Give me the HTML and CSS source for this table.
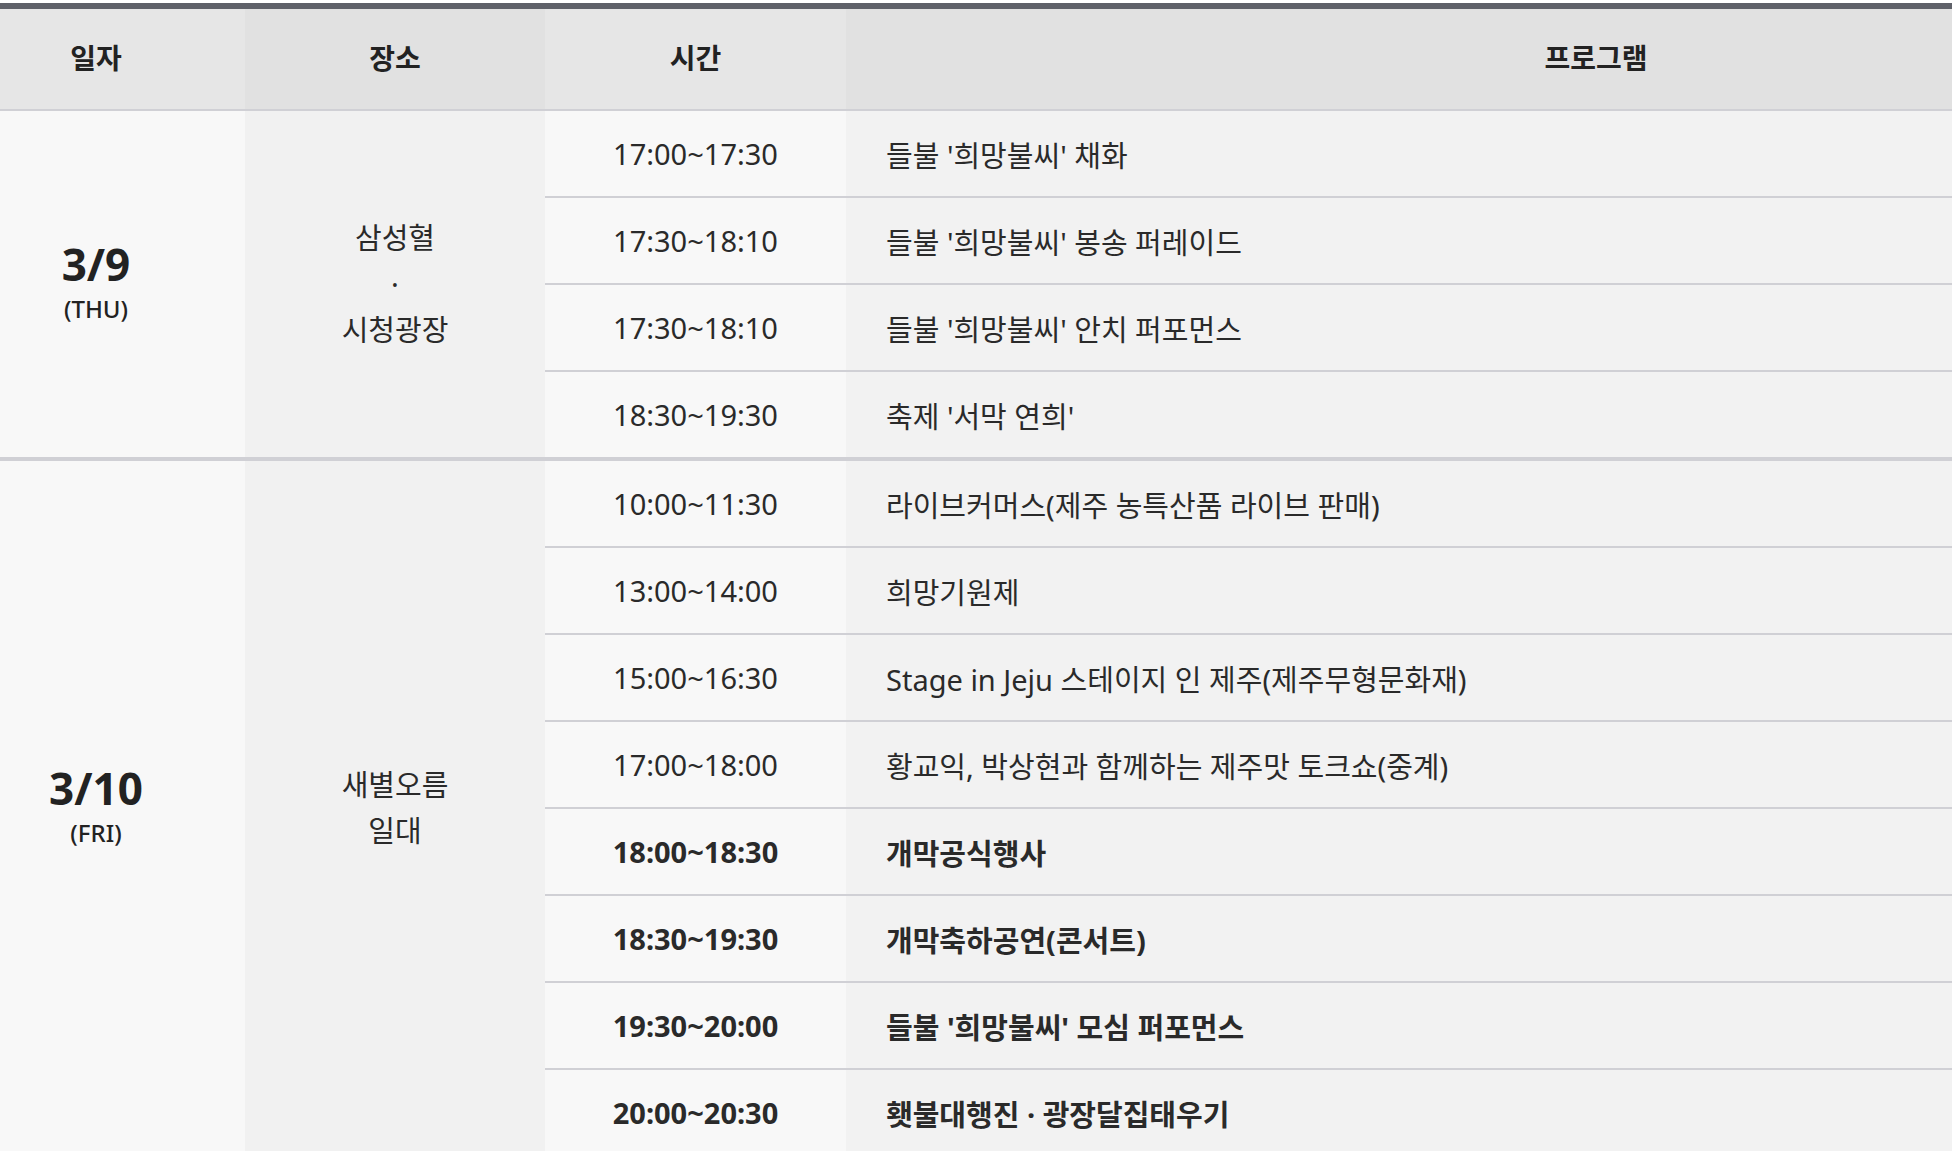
FILE: index.html
```html
<!DOCTYPE html>
<html lang="ko">
<head>
<meta charset="utf-8">
<title>일정표</title>
<link rel="stylesheet" href="styles.css">
</head>
<body>
<div class="wrap">
<table class="schedule">
  <colgroup>
    <col class="c-date">
    <col class="c-place">
    <col class="c-time">
    <col class="c-prog">
  </colgroup>
  <thead>
    <tr>
      <th class="h-date">일자</th>
      <th class="h-place">장소</th>
      <th class="h-time">시간</th>
      <th class="h-prog">프로그램</th>
    </tr>
  </thead>
  <tbody class="group">
    <tr>
      <td class="date" rowspan="4"><span class="day">3/9</span><span class="wd">(THU)</span></td>
      <td class="place" rowspan="4">삼성혈<br>·<br>시청광장</td>
      <td class="time">17:00~17:30</td>
      <td class="prog">들불 '희망불씨' 채화</td>
    </tr>
    <tr>
      <td class="time">17:30~18:10</td>
      <td class="prog">들불 '희망불씨' 봉송 퍼레이드</td>
    </tr>
    <tr>
      <td class="time">17:30~18:10</td>
      <td class="prog">들불 '희망불씨' 안치 퍼포먼스</td>
    </tr>
    <tr class="last">
      <td class="time">18:30~19:30</td>
      <td class="prog">축제 '서막 연희'</td>
    </tr>
  </tbody>
  <tbody class="group">
    <tr>
      <td class="date" rowspan="8"><span class="day">3/10</span><span class="wd">(FRI)</span></td>
      <td class="place" rowspan="8">새별오름<br>일대</td>
      <td class="time">10:00~11:30</td>
      <td class="prog">라이브커머스(제주 농특산품 라이브 판매)</td>
    </tr>
    <tr>
      <td class="time">13:00~14:00</td>
      <td class="prog">희망기원제</td>
    </tr>
    <tr>
      <td class="time">15:00~16:30</td>
      <td class="prog">Stage in Jeju 스테이지 인 제주(제주무형문화재)</td>
    </tr>
    <tr>
      <td class="time">17:00~18:00</td>
      <td class="prog">황교익, 박상현과 함께하는 제주맛 토크쇼(중계)</td>
    </tr>
    <tr class="strong">
      <td class="time">18:00~18:30</td>
      <td class="prog">개막공식행사</td>
    </tr>
    <tr class="strong">
      <td class="time">18:30~19:30</td>
      <td class="prog">개막축하공연(콘서트)</td>
    </tr>
    <tr class="strong">
      <td class="time">19:30~20:00</td>
      <td class="prog">들불 '희망불씨' 모심 퍼포먼스</td>
    </tr>
    <tr class="strong last">
      <td class="time">20:00~20:30</td>
      <td class="prog">횃불대행진 · 광장달집태우기</td>
    </tr>
  </tbody>
</table>
</div>
</body>
</html>
```

FILE: styles.css
```css
html, body {
  margin: 0;
  padding: 0;
  background: #ffffff;
  overflow: hidden;
}

body {
  font-family: "Noto Sans", "Noto Sans CJK KR", sans-serif;
  color: #2a2a2a;
}

.wrap {
  padding-top: 3px;
  width: 2346px;
}

.schedule {
  width: 2346px;
  table-layout: fixed;
  border-collapse: separate;
  border-spacing: 0;
  border-top: 6px solid #5f6169;
}

.c-date { width: 245px; }
.c-place { width: 300px; }
.c-time { width: 301px; }
.c-prog { width: 1500px; }

.schedule th {
  height: 102px;
  padding: 0 0 4px 0;
  font-size: 28px;
  font-weight: 700;
  color: #222;
  text-align: center;
  vertical-align: middle;
  border-bottom: 2px solid #d0d0d5;
  box-sizing: border-box;
}

.schedule .h-date { padding-right: 53px; }

.h-date, .h-time { background: #e6e6e6; }
.h-place, .h-prog { background: #e1e1e1; }

.schedule td {
  padding: 0;
  vertical-align: middle;
  box-sizing: border-box;
}

.schedule .time,
.schedule .prog {
  height: 87px;
  font-size: 29px;
  border-bottom: 2px solid #d0d0d5;
}

.schedule .last .time,
.schedule .last .prog {
  height: 89px;
  border-bottom-width: 4px;
}

.schedule .date,
.schedule .place {
  border-bottom: 4px solid #d0d0d5;
  text-align: center;
}

.schedule .date {
  background: #f8f8f8;
  padding-right: 53px;
}

.schedule .place {
  background: #f1f1f1;
  font-size: 29px;
  line-height: 46px;
}

.schedule .time {
  background: #f8f8f8;
  text-align: center;
}

.schedule .prog {
  background: #f2f2f2;
  padding-left: 40px;
  text-align: left;
}

.schedule .strong .time,
.schedule .strong .prog {
  font-weight: 700;
}

.day {
  display: block;
  font-size: 44px;
  font-weight: 700;
  line-height: 49px;
  color: #222;
}

.wd {
  display: block;
  font-size: 24px;
  font-weight: 500;
  line-height: 39px;
  color: #222;
}
```
